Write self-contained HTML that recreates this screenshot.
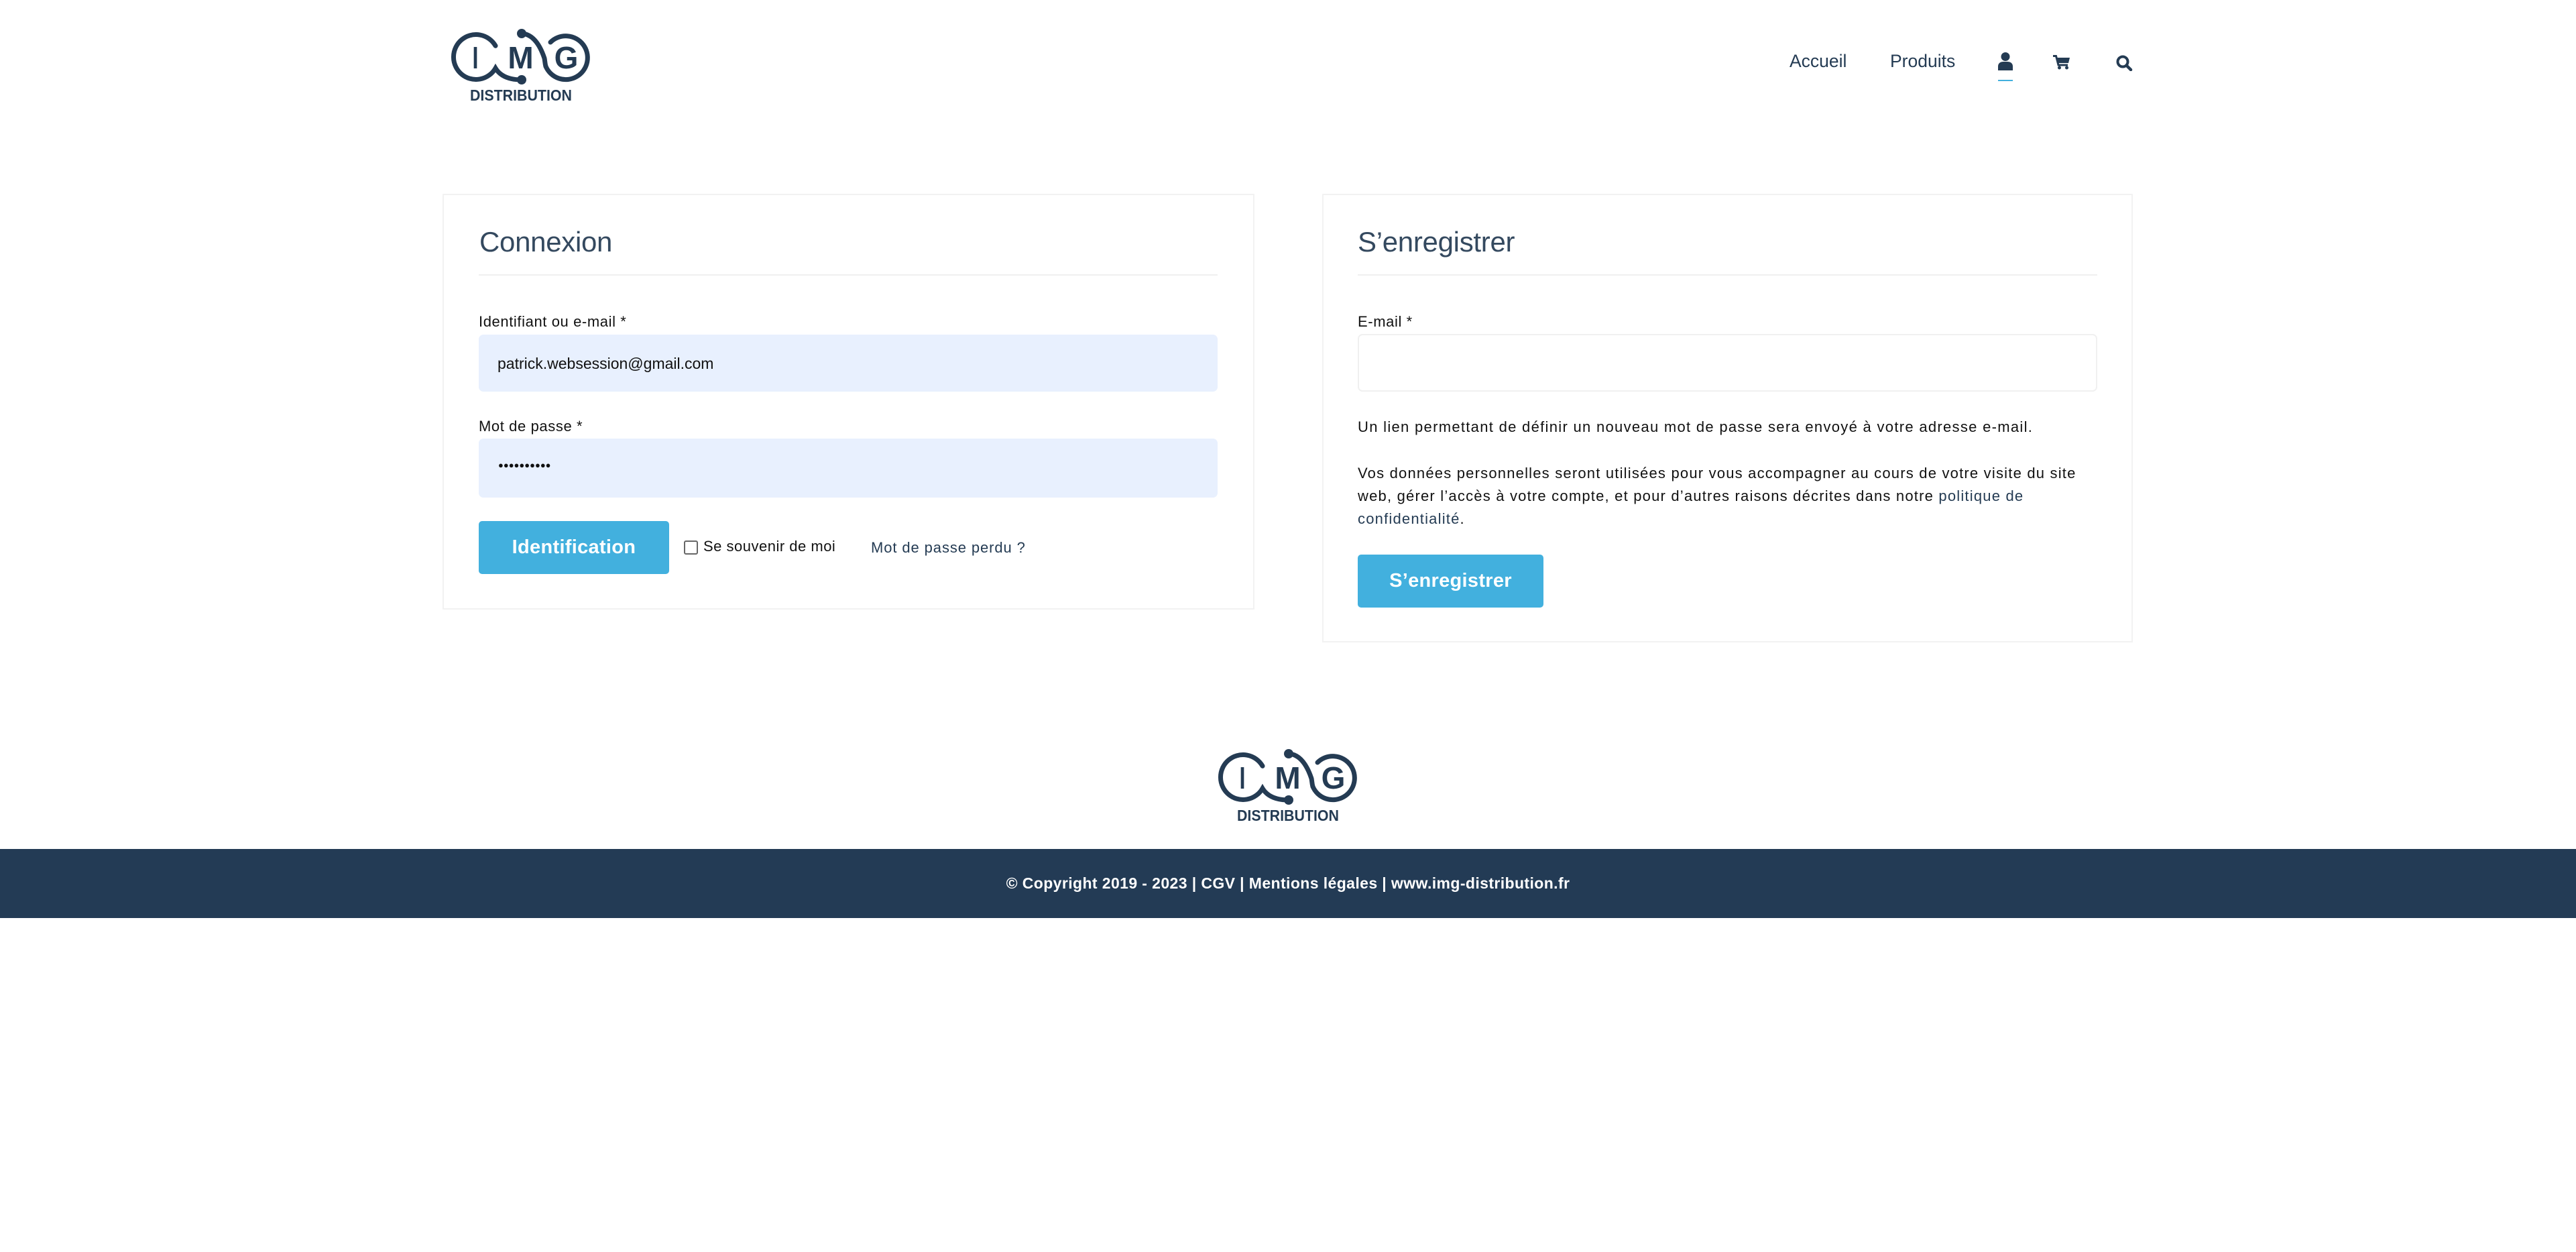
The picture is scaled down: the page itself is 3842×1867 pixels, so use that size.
<!DOCTYPE html>
<html><head><meta charset="utf-8"><style>
*{margin:0;padding:0;box-sizing:border-box}
body{width:3842px;height:1867px;background:#fff;font-family:"Liberation Sans",Arial,sans-serif;position:relative;overflow:hidden;color:#111}
.abs{position:absolute}
.nav{font-size:26.5px;color:#243b53;top:76px;white-space:nowrap}
.card{position:absolute;top:289px;border:2px solid #f2f2f2;background:#fff}
.h{position:absolute;font-size:42px;color:#34495f;font-weight:300;letter-spacing:-0.3px;white-space:nowrap}
.hl{position:absolute;height:2px;background:#f0f0f0}
.lbl{position:absolute;font-size:22px;letter-spacing:0.6px;white-space:nowrap;color:#111}
.inp{position:absolute;border-radius:7px}
.btn{position:absolute;background:#42b0de;color:#fff;border-radius:5px;font-size:29px;font-weight:bold;display:flex;align-items:center;justify-content:center;letter-spacing:0.3px}
.txt{position:absolute;font-size:22px;letter-spacing:1.3px;white-space:nowrap;line-height:34px;color:#111}
</style></head><body>

<svg class="abs" style="left:672px;top:43px" width="212" height="112" viewBox="0 0 212 112">
<g fill="none" stroke="#243b53" stroke-width="7" stroke-linecap="round">
<path d="M67,25.3 A33.5,33.5 0 1 0 67,58.7 C75,72 90,76 106,76"/>
<path d="M149,20 A32.5,32.5 0 1 1 142,56"/>
<path d="M106,7 C124,8 134,26 140,44 C141,50 141,53 142,56"/>
</g>
<circle cx="106" cy="7" r="7" fill="#243b53"/>
<circle cx="106" cy="76" r="7" fill="#243b53"/>
<text x="37" y="59" text-anchor="middle" font-family="Liberation Sans" font-weight="bold" font-size="46" fill="#243b53" textLength="9" lengthAdjust="spacingAndGlyphs">I</text>
<text x="104.5" y="59" text-anchor="middle" font-family="Liberation Sans" font-weight="bold" font-size="46" fill="#243b53">M</text>
<text x="172.5" y="59" text-anchor="middle" font-family="Liberation Sans" font-weight="bold" font-size="46" fill="#243b53">G</text>
<text x="29" y="107" font-family="Liberation Sans" font-weight="bold" font-size="23" fill="#243b53" textLength="152" lengthAdjust="spacingAndGlyphs">DISTRIBUTION</text>
</svg>

<div class="abs nav" style="left:2669px">Accueil</div>
<div class="abs nav" style="left:2819px">Produits</div>
<svg class="abs" style="left:2979px;top:78px" width="24" height="27" viewBox="0 0 24 27"><circle cx="12" cy="6.5" r="6.5" fill="#243b53"/><path d="M1,27 V21 C1,16 5,14 9,14 H15 C19,14 23,16 23,21 V27 Z" fill="#243b53"/></svg>
<div class="abs" style="left:2980px;top:119px;width:22px;height:2px;background:#42b0de"></div>
<svg class="abs" style="left:3062px;top:82px" width="26" height="22" viewBox="0 0 26 22"><path d="M0,1.5 H4.5 L8,15 H22" fill="none" stroke="#243b53" stroke-width="3"/><path d="M6,4 H25 L23,12 H8 Z" fill="#243b53"/><circle cx="9.5" cy="19" r="2.5" fill="#243b53"/><circle cx="20.5" cy="19" r="2.5" fill="#243b53"/></svg>
<svg class="abs" style="left:3156px;top:82px" width="26" height="24" viewBox="0 0 26 24"><circle cx="10" cy="10" r="7.5" fill="none" stroke="#243b53" stroke-width="4"/><path d="M15.5,15.5 L22,22" stroke="#243b53" stroke-width="4.5" stroke-linecap="round"/></svg>

<div class="card" style="left:660px;width:1211px;height:620px"></div>
<div class="h" style="left:715px;top:337px">Connexion</div>
<div class="hl" style="left:714px;top:409px;width:1102px"></div>
<div class="lbl" style="left:714px;top:467px">Identifiant ou e-mail *</div>
<div class="inp" style="left:714px;top:499px;width:1102px;height:85px;background:#e8f0fe"></div>
<div class="abs" style="left:742px;top:529px;font-size:23px;color:#111">patrick.websession@gmail.com</div>
<div class="lbl" style="left:714px;top:623px">Mot de passe *</div>
<div class="inp" style="left:714px;top:654px;width:1102px;height:88px;background:#e8f0fe"></div>
<div class="abs" style="left:743px;top:686px;font-size:13px;letter-spacing:0;color:#111">●●●●●●●●●●</div>
<div class="btn" style="left:714px;top:777px;width:284px;height:79px">Identification</div>
<div class="abs" style="left:1020px;top:806px;width:21px;height:21px;border:2px solid #666;border-radius:3px"></div>
<div class="lbl" style="left:1049px;top:802px;font-size:22px;letter-spacing:0.5px">Se souvenir de moi</div>
<div class="lbl" style="left:1299px;top:804px;color:#243b53;letter-spacing:0.9px">Mot de passe perdu ?</div>

<div class="card" style="left:1972px;width:1209px;height:669px"></div>
<div class="h" style="left:2025px;top:337px">S’enregistrer</div>
<div class="hl" style="left:2025px;top:409px;width:1103px"></div>
<div class="lbl" style="left:2025px;top:467px">E-mail *</div>
<div class="inp" style="left:2025px;top:498px;width:1103px;height:86px;border:2px solid #f0f0f0"></div>
<div class="txt" style="left:2025px;top:620px">Un lien permettant de définir un nouveau mot de passe sera envoyé à votre adresse e-mail.</div>
<div class="txt" style="left:2025px;top:689px;letter-spacing:1.2px">Vos données personnelles seront utilisées pour vous accompagner au cours de votre visite du site<br>web, gérer l’accès à votre compte, et pour d’autres raisons décrites dans notre <span style="color:#243b53">politique de</span><br><span style="color:#243b53">confidentialité</span>.</div>
<div class="btn" style="left:2025px;top:827px;width:277px;height:79px">S’enregistrer</div>

<svg class="abs" style="left:1816px;top:1117px" width="212" height="112" viewBox="0 0 212 112">
<g fill="none" stroke="#243b53" stroke-width="7" stroke-linecap="round">
<path d="M67,25.3 A33.5,33.5 0 1 0 67,58.7 C75,72 90,76 106,76"/>
<path d="M149,20 A32.5,32.5 0 1 1 142,56"/>
<path d="M106,7 C124,8 134,26 140,44 C141,50 141,53 142,56"/>
</g>
<circle cx="106" cy="7" r="7" fill="#243b53"/>
<circle cx="106" cy="76" r="7" fill="#243b53"/>
<text x="37" y="59" text-anchor="middle" font-family="Liberation Sans" font-weight="bold" font-size="46" fill="#243b53" textLength="9" lengthAdjust="spacingAndGlyphs">I</text>
<text x="104.5" y="59" text-anchor="middle" font-family="Liberation Sans" font-weight="bold" font-size="46" fill="#243b53">M</text>
<text x="172.5" y="59" text-anchor="middle" font-family="Liberation Sans" font-weight="bold" font-size="46" fill="#243b53">G</text>
<text x="29" y="107" font-family="Liberation Sans" font-weight="bold" font-size="23" fill="#243b53" textLength="152" lengthAdjust="spacingAndGlyphs">DISTRIBUTION</text>
</svg>

<div class="abs" style="left:0;top:1266px;width:3842px;height:103px;background:#233b55;display:flex;align-items:center;justify-content:center;color:#fff;font-size:23px;font-weight:bold;letter-spacing:0.4px;white-space:nowrap">© Copyright 2019 - 2023 | CGV | Mentions légales | www.img-distribution.fr</div>
</body></html>
